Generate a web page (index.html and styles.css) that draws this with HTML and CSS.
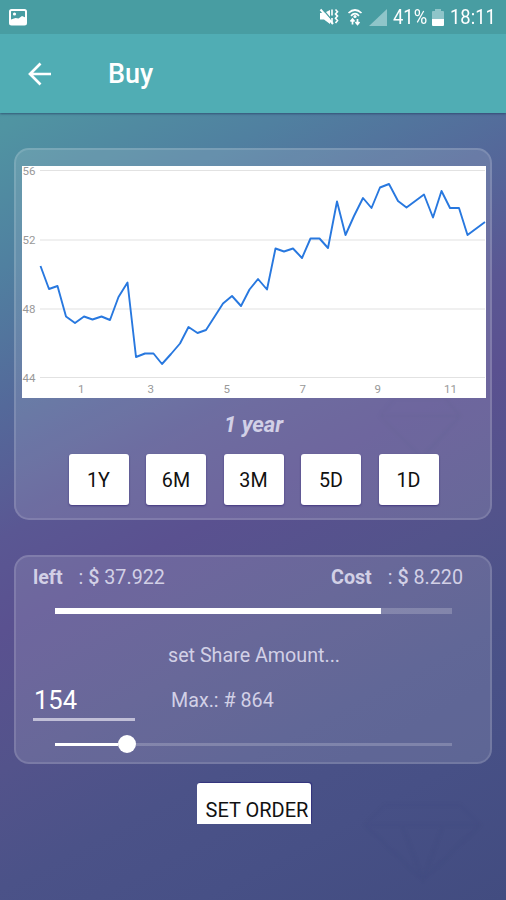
FILE: index.html
```html
<!DOCTYPE html>
<html lang="en">
<head>
<meta charset="utf-8">
<title>Buy</title>
<link rel="stylesheet" href="styles.css">
</head>
<body>
<div class="screen">
  <svg class="gems" width="506" height="900" viewBox="0 0 506 900"><path d="M385 805h75l20 20-57 55-58-55zM365 825h115M402 825l21 55 20-55M395 398h50l15 18-38 42-42-42zM380 416h80"/></svg>
  <header class="top">
    <div class="status">
      <svg class="photo" width="18" height="17" viewBox="0 0 18 17"><rect x="1" y="1" width="16" height="14.5" rx="1.5" fill="none" stroke="#fff" stroke-width="2"/><path d="M2 10.500 6.500 9l3 .5L13 7l3.500 1.500V15H2z" fill="#fff"/><circle cx="5.500" cy="5" r="1.600" fill="#fff"/></svg>
      <div class="indicators">
        <svg class="mute" width="20" height="18" viewBox="0 0 20 18"><path d="M1 5h4l6-3v14l-6-4.500H1z" fill="#fff"/><path d="M3.500 1 15 14.500" stroke="#489da2" stroke-width="1.200"/><path d="M1.500 1.500 14 16" stroke="#fff" stroke-width="2"/><path d="M13 1.500v6M13 10v4M16.500 1.500l2 2.200-2 2.200 2 2.200-2 2.200 2 2.200-2 2.500" fill="none" stroke="#fff" stroke-width="1.600"/></svg>
        <svg class="wifi" width="16" height="18" viewBox="0 0 16 18"><path d="M1.500 5Q8-1 14.500 5M4 7.800q4-4.200 8 0" fill="none" stroke="#fff" stroke-width="1.700"/><circle cx="8" cy="8.500" r="1.600" fill="#fff"/><path d="M5.500 16.500V11M3.500 13.500l2-2.500 2 2.500M10.500 11v5.500M8.500 14l2 2.500 2-2.500" fill="none" stroke="#fff" stroke-width="1.700"/></svg>
        <svg class="signal" width="18" height="17" viewBox="0 0 18 17"><path d="M0 17 18 0v17z" fill="#8fc5c9"/></svg>
        <span class="percent">41%</span>
        <svg class="battery" width="12" height="17" viewBox="0 0 12 17"><path d="M0 3q0-1 1-1h2V0h6v2h2q1 0 1 1v7H0z" fill="#8fc5c9"/><path d="M0 10h12v6q0 1-1 1H1q-1 0-1-1z" fill="#fff"/></svg>
        <span class="clock">18:11</span>
      </div>
    </div>
    <div class="appbar">
      <svg width="24" height="24" viewBox="0 0 24 24"><path d="M23 12H2M12.500 1.500 2 12l10.500 10.500" fill="none" stroke="#fff" stroke-width="2.700"/></svg>
      <h1>Buy</h1>
    </div>
  </header>

  <section class="card history">
    <svg class="chart" width="464" height="232" viewBox="22 166 464 232">
      <path class="grid" d="M40 170.500H485M40 240H485M40 309H485M40 377.500H485"/>
      <g class="labels">
        <text x="22.500" y="175">56</text><text x="22.500" y="244">52</text><text x="22.500" y="313">48</text><text x="22.500" y="382">44</text>
        <text x="78" y="392.500">1</text><text x="147.500" y="392.500">3</text><text x="223.500" y="392.500">5</text><text x="299.500" y="392.500">7</text><text x="374.500" y="392.500">9</text><text x="444" y="392.500">11</text>
      </g>
      <polyline class="price" points="40.5,266 49,289 57.5,286 66,316.5 75,323 84,316.5 92.5,319.5 101.5,316.5 110,320 118.5,297 127.5,282.5 136,357 145,353.5 153.5,353.5 162,364 171,354 180,343.5 188.5,327 197.5,333 206,330 215,316 223,303.5 232,296 241,306 249.5,289.5 258,279 267,289.5 275.5,248.5 284,251.5 293,248.5 302,258 310.5,238.5 319.5,238.5 328,248 337,201.5 345.5,235 354,216 363,198 371.5,208 380,187.5 389,184 398,201 406.5,207.5 424,194.5 433,217.5 441.5,191 450,208 459,208 467.5,235 485,222"/>
    </svg>
    <p class="period">1 year</p>
    <div class="ranges"><button>1Y</button><button>6M</button><button>3M</button><button>5D</button><button>1D</button></div>
  </section>

  <section class="card order">
    <div class="money">
      <div><b>left</b><span>: <i>$</i> 37.922</span></div>
      <div><b>Cost</b><span>: <i>$</i> 8.220</span></div>
    </div>
    <div class="budget"><div class="spent"></div></div>
    <p class="hint">set Share Amount...</p>
    <div class="amount"><div class="field">154</div><div class="max">Max.: # 864</div></div>
    <div class="slider"><div class="filled"></div><div class="thumb"></div><div class="rest"></div></div>
  </section>

  <div class="submit"><button>SET ORDER</button></div>
</div>
</body>
</html>
```
FILE: styles.css
```css
* { box-sizing: border-box; }
body { margin: 0; font-family: Roboto, sans-serif; }
h1, p { margin: 0; }
svg { display: block; flex: none; }
button { border: 0; padding: 0; font-family: inherit; color: #111; background: #fff; }

.screen {
  position: relative;
  isolation: isolate;
  height: 900px;
  overflow: hidden;
  background: linear-gradient(152deg, #4f9ba4 0%, #5094a2 11%, #5080a0 23%, #54699a 35%, #5a5793 46%, #5a5190 54%, #53538b 66%, #4b5288 76%, #475086 86%, #424c80 100%);
}
.gems { position: absolute; inset: 0; z-index: -1; fill: none; stroke: rgba(50, 60, 120, .1); stroke-width: 2; filter: blur(1.500px); }
.top { height: 113px; background: #50adb4; box-shadow: 0 1px 2px rgba(30, 50, 90, .6); }
.status { height: 34px; padding: 0 11px 0 9px; display: flex; align-items: center; justify-content: space-between; background: #489da2; color: #fff; font-size: 20px; }
.indicators { display: flex; align-items: center; }
.wifi { margin-left: 8px; }
.signal { margin-left: 6px; }
.percent { width: 35px; margin-left: 6px; transform-origin: left; transform: scaleX(.92); white-space: nowrap; }
.battery { margin-left: 4px; }
.clock { width: 45px; margin-left: 6px; transform-origin: left; transform: scaleX(.92); white-space: nowrap; }
.appbar { height: 79px; padding-left: 28px; display: flex; align-items: center; gap: 56px; }
.appbar h1 { color: #fff; font-size: 27px; font-weight: 500; line-height: 32px; }

.card { margin: 0 14px; border: 2px solid rgba(255, 255, 255, .13); border-radius: 15px; background: rgba(255, 255, 255, .125); color: #d2d0e6; }
.history { height: 372px; margin-top: 35px; padding: 16px 5px 0 6px; }
.chart { background: #fff; overflow: visible; }
.grid { stroke: #e2e2e2; stroke-width: 1.200; }
.labels { fill: #999; font: 11.500px Roboto, sans-serif; }
.price { fill: none; stroke: #2878df; stroke-width: 1.900; stroke-linejoin: round; }
.period { margin-top: 13px; text-align: center; font-size: 22px; line-height: 28px; font-weight: 700; font-style: italic; }
.ranges { margin-top: 15px; display: flex; justify-content: center; gap: 17.500px; }
.ranges button { width: 60px; height: 51px; padding-top: 2px; border-radius: 3px; font-size: 19.700px; box-shadow: 0 1px 2px rgba(45, 30, 110, .65); }

.order { height: 209px; margin-top: 35px; padding: 9px 27px 0 17px; }
.money { display: flex; justify-content: space-between; font-size: 19.700px; line-height: 24px; }
.money div { display: flex; gap: 16px; }
.money b { font-weight: 700; }
.money i { font-style: normal; font-weight: 500; }
.budget { width: 397px; height: 6px; margin: 18px 0 0 22px; background: rgba(255, 255, 255, .2); }
.spent { width: 326px; height: 6px; background: #fff; }
.hint { margin: 28px 0 0 135px; font-size: 19.700px; line-height: 28px; }
.amount { margin-top: 13px; display: flex; align-items: flex-start; }
.field { width: 102px; height: 38px; padding-left: 1px; border-bottom: 3px solid #c1bfd7; color: #fff; font-size: 25.500px; line-height: 35px; }
.max { margin-left: 36px; font-size: 19.700px; line-height: 35px; }
.slider { width: 397px; height: 18px; margin: 14px 0 0 22px; display: flex; align-items: center; }
.filled { width: 62.500px; height: 3px; background: #fff; }
.thumb { width: 18px; height: 18px; border-radius: 50%; background: #fff; }
.rest { flex: 1; height: 3px; background: rgba(255, 255, 255, .2); }

.submit { width: 114px; height: 41px; margin: 19px 0 0 197px; overflow: hidden; border-radius: 3px 3px 0 0; box-shadow: 1px -1px 1px #33327e; }
.submit button { width: 114px; height: 53px; padding-left: 6px; font-size: 20px; white-space: nowrap; }
```
